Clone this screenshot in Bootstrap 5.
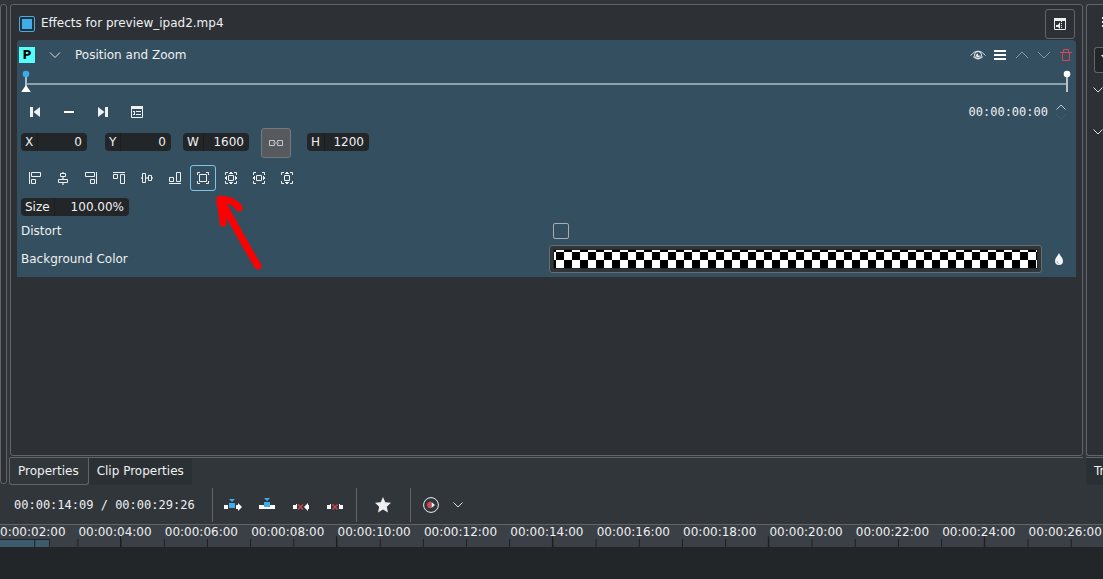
<!DOCTYPE html>
<html lang="en">
<head>
<meta charset="utf-8">
<meta name="viewport" content="width=device-width, initial-scale=1">
<title>Effects</title>
<link href="https://cdn.jsdelivr.net/npm/bootstrap@5.3.0/dist/css/bootstrap.min.css" rel="stylesheet">
<style>
:root { --line:#616569; --win:#31363b; --view:#2d3136; --dark:#232629; --fx:#344f5f; --ink:#eff0f1; }
body { background:var(--win); color:var(--ink); font:12px/16px "DejaVu Sans",sans-serif; }
svg { display:block; flex:none; }
.mono { font-family:"DejaVu Sans Mono",monospace; }
.tool { border:1px solid transparent; background:none; color:var(--ink); padding:0; display:flex; align-items:center; justify-content:center; flex:none; border-radius:3px; }
.tool:hover { border-color:#3daee9; }
.docks { padding-top:4px; }
.dock-left { width:7px; border:1px solid var(--line); border-left:0; border-radius:0 3px 3px 0; margin-bottom:2px; }
.dock-mid { margin-left:3px; margin-right:3px; min-width:0; }
.pane { background:var(--view); border:1px solid var(--line); border-radius:3px; }
.dock-right { width:17px; overflow:hidden; }
.dock-right .pane { border-right:0; border-radius:3px 0 0 3px; }
.pane-body { padding:0 6px; }
.pane-head { height:35px; padding:4px 1px 1px 2px; gap:6px; }
.pane-head label { padding-bottom:2px; }
.tick { appearance:none; width:16px; height:16px; margin:0; border:1px solid #a8adb1; border-radius:2px; flex:none; }
.tick.on { border-color:#3daee9; }
.tick.on:checked { background:#3daee9 content-box; padding:2px; }
.sz30 { width:30px; height:30px; }
.boxed { border-color:var(--line); }
.fx { background:var(--fx); border-radius:4px 4px 0 0; padding-bottom:3px; }
.fx-head { height:30px; padding-left:2px; margin-right:-1px; }
.tag { width:16px; height:16px; background:#54fffb; color:#000; font-weight:700; text-align:center; }
.sz20 { width:20px; height:22px; }
.sz22 { width:22px; height:22px; }
.chev { width:26px; margin:0 7px; height:22px; }
.keys { height:28px; padding:0 5px 0 4px; }
.keys-line { height:2px; background:#8fa2ac; margin-top:13px; }
.keys-line.start { width:5px; margin-left:-5px; }
.sz34 { width:34px; height:26px; }
.transport { height:29px; padding:0 2px 1px 1px; }
.row-geo { height:32px; padding-left:4px; }
.row-align { height:38px; padding-left:5px; gap:2px; }
.sz26 { width:26px; height:26px; }
.sel { border-color:#7fc4e6; }
.spin { display:flex; height:18px; background:var(--dark); border-radius:4px; overflow:hidden; line-height:18px; flex:none; }
.row-geo .spin { margin-bottom:2px; }
.spin label { padding:0 4px; border-right:1px solid #1b1e20; }
.spin input { flex:1; min-width:0; width:0; border:0; padding:0 5px 0 0; background:none; color:inherit; text-align:right; outline:0; }
.w66 { width:66px; }
.w62 { width:62px; }
.w108 { width:108px; }
.g4 { margin-left:4px; } .g12 { margin-left:12px; } .g16 { margin-left:16px; } .g18 { margin-left:18px; }
.row-size { height:20px; padding-left:4px; }
.form-row { padding-left:4px; display:grid; grid-template-columns:minmax(0,1fr) minmax(0,1fr); align-items:center; }
.r27 { height:27px; } .r30 { height:30px; }
.link-on { background:#56595e; border-color:#75797d; }
.swatch { height:28px; flex:1; padding:3px; border:1px solid #6a6d70; border-radius:3px; background:var(--win); }
.checks { display:block; height:20px; border:1px solid var(--dark); background:conic-gradient(#000 25%,#fff 0 50%,#000 0 75%,#fff 0) -6px 2px/16px 16px padding-box; }
.tabs-bar { margin-top:1px; border-top:1px solid var(--line); height:29px; }
.tab { border:0; background:#2b3034; color:var(--ink); padding:0 8px 2px; height:27px; border-radius:0 0 3px 3px; white-space:nowrap; }
.tab.cur { background:var(--win); border:1px solid var(--line); border-top:0; height:27px; margin-left:-1px; padding:0 9px 1px 8px; }
.bar { height:38px; padding-left:14px; }
.bar .time { width:198px; }
.rule { width:1px; height:34px; background:var(--line); margin-right:3px; }
.rule.mid { margin-left:4px; }
.rule.wide { margin-left:4px; margin-right:9px; }
.rule.end { margin-left:10px; }
.ruler { height:23px; background:#3b4046; border-top:1px solid var(--line); position:relative; overflow:hidden; }
.zone { position:absolute; left:0; bottom:0; width:50px; height:8px; background:#3d5b6d; border:1px solid var(--dark); border-width:1px 1px 0 0; }
.scale { position:relative; display:grid; grid-template-columns:repeat(13,minmax(0,1fr)); width:calc(100% + 20px); margin-left:-8px; height:22px; line-height:14px; white-space:nowrap;
 background:linear-gradient(90deg,#1b1e20 1px,transparent 1px) -1px 14px/calc(100% / 26) 8px repeat-x, linear-gradient(90deg,#1b1e20 1px,transparent 1px) 128px 11px/calc(500% / 26) 11px repeat-x; }
.scale span:first-child { padding-left:8px; }
.tracks { background:var(--dark); height:32px; }
.side-tool { height:28px; margin:10px 0 0 7px; }
.side-combo { height:26px; margin:4px 0 0 7px; border:1px solid var(--line); border-right:0; border-radius:3px 0 0 3px; background:var(--dark); overflow:hidden; width:20px; padding:4px; display:block; }
.side-list { display:grid; gap:36px; margin:14px 0 0 6px; }
.callout { position:absolute; left:199px; top:154px; pointer-events:none; }
</style>
</head>
<body>
<div class="d-flex flex-column vh-100 overflow-hidden">
 <main class="docks d-flex flex-fill">
  <div class="dock-left pane"></div>
  <section class="dock-mid d-flex flex-column flex-fill">
   <div class="pane pane-body flex-fill">
    <div class="pane-head d-flex align-items-center">
     <input class="tick on" type="checkbox" id="all" checked><label for="all" class="me-auto">Effects for preview_ipad2.mp4</label>
     <button class="tool sz30 boxed" aria-label="Split view"><svg width="14" height="14" viewBox="0 0 14 14"><path d="M1.500 1.500h11v11h-11z" fill="none" stroke="#eff0f1"/><path d="M1 1h12v3H1z" fill="#eff0f1"/><path d="M8.500 4v9" stroke="#eff0f1" stroke-dasharray="1 1"/><path d="M7 5v7L5 10H3V8h2z" fill="#eff0f1"/></svg></button>
    </div>
    <article class="fx position-relative">
     <div class="fx-head d-flex align-items-center">
      <span class="tag">P</span>
      <button class="tool chev" aria-label="Collapse"><svg width="12" height="8" viewBox="0 0 12 8"><path d="M1 1.500l5 5 5-5" fill="none" stroke="#dfe2e4"/></svg></button>
      <span class="me-auto">Position and Zoom</span>
      <button class="tool sz22" aria-label="Toggle effect"><svg width="16" height="12" viewBox="0 0 16 12"><path d="M.5 6.500Q8-2.500 15.500 6.500M3 7.500q5 5 10 0" fill="none" stroke="#d5dade"/><circle cx="8" cy="6" r="3.500" fill="none" stroke="#eff0f1"/><path d="M8 4.500A2 2 0 1 0 10 6.500H8z" fill="#eff0f1"/></svg></button>
      <button class="tool sz22" aria-label="Menu"><svg width="12" height="10" viewBox="0 0 12 10"><path d="M0 1h12M0 5h12M0 9h12" stroke="#fff" stroke-width="2"/></svg></button>
      <button class="tool sz22" aria-label="Move up"><svg width="14" height="8" viewBox="0 0 14 8"><path d="M1 7l6-6 6 6" fill="none" stroke="#87959d"/></svg></button>
      <button class="tool sz22" aria-label="Move down"><svg width="14" height="8" viewBox="0 0 14 8"><path d="M1 1l6 6 6-6" fill="none" stroke="#87959d"/></svg></button>
      <button class="tool sz22" aria-label="Delete"><svg width="12" height="12" viewBox="0 0 12 12"><path d="M0 3.500h12M3.500 3V.5h5V3M2.500 4v7.500h7V4" fill="none" stroke="#da4453"/></svg></button>
     </div>
     <div class="keys d-flex">
      <svg width="10" height="24" viewBox="0 0 10 24"><path d="M5 14h5" stroke="#8fa2ac" stroke-width="2"/><path d="M5 4v12" stroke="#9fc3d6" stroke-width="2"/><circle cx="5" cy="4" r="3.300" fill="#3daee9"/><path d="M5 15l4.800 7H.2z" fill="#fff"/></svg>
      <div class="keys-line flex-fill"></div>
      <svg width="8" height="24" viewBox="0 0 8 24"><path d="M0 14h4" stroke="#8fa2ac" stroke-width="2"/><path d="M4 4v18" stroke="#b9c4ca" stroke-width="2"/><circle cx="4" cy="4" r="3.300" fill="#fff"/></svg>
     </div>
     <div class="transport d-flex align-items-center">
      <button class="tool sz34" aria-label="Previous keyframe"><svg width="10" height="10" viewBox="0 0 10 10"><path d="M0 0h3v10H0zM10 0v10L3.500 5z" fill="#eff0f1"/></svg></button>
      <button class="tool sz34" aria-label="Remove keyframe"><svg width="10" height="2"><path d="M0 0h10v2H0z" fill="#fff"/></svg></button>
      <button class="tool sz34" aria-label="Next keyframe"><svg width="10" height="10" viewBox="0 0 10 10"><path d="M7 0h3v10H7zM0 0v10l6.500-5z" fill="#eff0f1"/></svg></button>
      <button class="tool sz34 me-auto" aria-label="Keyframe options"><svg width="12" height="12" viewBox="0 0 12 12"><path d="M.5.5h11v11H.5z" fill="none" stroke="#eff0f1"/><path d="M0 0h12v3H0z" fill="#eff0f1"/><path d="M2 5.500h2M5 5.500h5M2 8.500h2M5 8.500h5M3.500 5v4" stroke="#eff0f1"/></svg></button>
      <span class="mono">00:00:00:00</span>
      <button class="tool sz26" aria-label="Step"><svg width="10" height="16" viewBox="0 0 10 16"><path d="M.5 5.500L5 1l4.500 4.500" fill="none" stroke="#c5ccd0"/><path d="M.5 10.500L5 15l4.500-4.500" fill="none" stroke="#4b5a64"/></svg></button>
     </div>
     <div class="row-geo d-flex align-items-center">
      <div class="spin w66"><label for="x">X</label><input id="x" value="0"></div>
      <div class="spin w66 g18"><label for="y">Y</label><input id="y" value="0"></div>
      <div class="spin w66 g12"><label for="w">W</label><input id="w" value="1600"></div>
      <button class="tool sz30 link-on g12" aria-label="Keep aspect ratio"><svg width="14" height="8" viewBox="0 0 14 8"><path d="M.5 1.500h5v5h-5zM8.500 1.500h5v5h-5z" fill="none" stroke="#c5c8ca"/><path d="M4 4h6" stroke="#909397" stroke-width="2"/></svg></button>
      <div class="spin w62 g16"><label for="h">H</label><input id="h" value="1200"></div>
     </div>
     <div class="row-align d-flex align-items-center">
      <button class="tool sz26" aria-label="Align left"><svg width="14" height="14" viewBox="0 0 14 14" fill="none" stroke="#eff0f1"><path d="M1.500 1v12M3.500 1.500h9v4h-9zM3.500 8.500h4v4h-4z"/></svg></button>
      <button class="tool sz26" aria-label="Center horizontally"><svg width="14" height="14" viewBox="0 0 14 14" fill="none" stroke="#eff0f1"><path d="M7 1v1M7 6v2M7 12v2" stroke="#a3b0b8" stroke-width="2"/><path d="M4.500 2.500h5v3h-5zM2.500 8.500h9v3h-9z"/></svg></button>
      <button class="tool sz26" aria-label="Align right"><svg width="14" height="14" viewBox="0 0 14 14" fill="none" stroke="#eff0f1"><path d="M12.500 1v12M1.500 1.500h9v4h-9zM6.500 8.500h4v4h-4z"/></svg></button>
      <button class="tool sz26" aria-label="Align top"><svg width="14" height="14" viewBox="0 0 14 14" fill="none" stroke="#eff0f1"><path d="M1 1.500h12M1.500 3.500h4v4h-4zM8.500 3.500h4v9h-4z"/></svg></button>
      <button class="tool sz26" aria-label="Center vertically"><svg width="14" height="14" viewBox="0 0 14 14" fill="none" stroke="#eff0f1"><path d="M1 7h1M6 7h2M12 7h1" stroke="#a3b0b8" stroke-width="2"/><path d="M2.500 2.500h3v9h-3zM8.500 4.500h3v5h-3z"/></svg></button>
      <button class="tool sz26" aria-label="Align bottom"><svg width="14" height="14" viewBox="0 0 14 14" fill="none" stroke="#eff0f1"><path d="M1 12.500h12M1.500 6.500h4v4h-4zM8.500 1.500h4v9h-4z"/></svg></button>
      <button class="tool sz26 sel" aria-label="Fit to frame"><svg width="14" height="14" viewBox="0 0 14 14" fill="none" stroke="#eff0f1"><path d="M1.500 4V1.500H4M10 1.500h2.500V4M12.500 10v2.500H10M4 12.500H1.500V10M3.500 3.500h7v7h-7z"/></svg></button>
      <button class="tool sz26" aria-label="Original size"><svg width="14" height="14" viewBox="0 0 14 14" fill="none" stroke="#eff0f1"><path d="M1.500 4V1.500H4M10 1.500h2.500V4M12.500 10v2.500H10M4 12.500H1.500V10M4.500 4.500h5v5h-5zM6 1.500h2M5 2.500h4M6 12.500h2M5 11.500h4M1.500 6v2M2.500 5v4M12.500 6v2M11.500 5v4"/></svg></button>
      <button class="tool sz26" aria-label="Fit width"><svg width="14" height="14" viewBox="0 0 14 14" fill="none" stroke="#eff0f1"><path d="M1.500 4V1.500H4M10 1.500h2.500V4M12.500 10v2.500H10M4 12.500H1.500V10M4.500 4.500h5v5h-5zM1.500 6v2M2.500 5v4M12.500 6v2M11.500 5v4"/></svg></button>
      <button class="tool sz26" aria-label="Fit height"><svg width="14" height="14" viewBox="0 0 14 14" fill="none" stroke="#eff0f1"><path d="M1.500 4V1.500H4M10 1.500h2.500V4M12.500 10v2.500H10M4 12.500H1.500V10M4.500 4.500h5v5h-5zM6 1.500h2M5 2.500h4M6 12.500h2M5 11.500h4"/></svg></button>
     </div>
     <div class="row-size d-flex align-items-center"><div class="spin w108"><label for="size">Size</label><input id="size" value="100.00%"></div></div>
     <div class="form-row r27"><label for="distort">Distort</label><input class="tick g4" type="checkbox" id="distort"></div>
     <div class="form-row r30"><label for="bg">Background Color</label>
      <div class="d-flex align-items-center"><button class="swatch" id="bg" aria-label="Background Color"><span class="checks"></span></button>
      <button class="tool sz34" aria-label="Pick color"><svg width="10" height="14" viewBox="0 0 10 14"><path d="M5 1c1 2.500 4 5 4 8a4 4 0 0 1-8 0c0-3 3-5.500 4-8z" fill="#f3f4f5"/><path d="M3 9q0 2.500 2 3" fill="none" stroke="#a5afb5"/></svg></button></div>
     </div>
     <svg class="callout" width="48" height="78" viewBox="0 0 48 78"><path d="M42 72C31 54 20 34 5 6M7 29C7 18 3 9 4 5C11 5 19 8 23 14" fill="none" stroke="#f00" stroke-width="7" stroke-linecap="round" stroke-linejoin="round"/></svg>
    </article>
   </div>
   <div class="tabs-bar d-flex"><button class="tab cur">Properties</button><button class="tab">Clip Properties</button></div>
  </section>
  <aside class="dock-right d-flex flex-column">
   <div class="pane flex-fill">
    <div class="side-tool"><svg width="12" height="14" viewBox="0 0 12 14" class="ms-2"><path d="M0 3h6M0 7h6M0 11h6" stroke="#eff0f1" stroke-width="2"/></svg></div>
    <button class="side-combo" aria-label="Filter"><svg width="16" height="16" viewBox="0 0 16 16"><path d="M2 3h12L9 9v4l-2 1V9z" fill="#eff0f1"/></svg></button>
    <div class="side-list"><svg width="10" height="6" viewBox="0 0 10 6"><path d="M.5.5L5 5 9.500.5" fill="none" stroke="#dfe2e4"/></svg><svg width="10" height="6" viewBox="0 0 10 6"><path d="M.5.5L5 5 9.500.5" fill="none" stroke="#dfe2e4"/></svg></div>
   </div>
   <div class="tabs-bar d-flex"><button class="tab">Tr</button></div>
  </aside>
 </main>
 <div class="bar d-flex align-items-center">
  <span class="mono time">00:00:14:09 / 00:00:29:26</span>
  <span class="rule"></span>
  <button class="tool sz34" aria-label="Insert clip"><svg width="18" height="14" viewBox="0 0 18 14"><path d="M0 7h4v4H0zM12 7h2V5l4 4-4 4v-2h-2z" fill="#fff"/><path d="M5 5h6v5H5zM5 1h6L8 4z" fill="#3daee9"/></svg></button>
  <button class="tool sz34" aria-label="Overwrite clip"><svg width="16" height="14" viewBox="0 0 16 14"><path d="M0 7h16v4H0z" fill="#fff"/><path d="M5 4h6v5H5zM5 0h6L8 3z" fill="#3daee9"/></svg></button>
  <button class="tool sz34" aria-label="Extract zone"><svg width="18" height="14" viewBox="0 0 18 14"><path d="M1 7h3V6h1v5H1zM12 9l4-4v2h1v4h-1v2z" fill="#fff"/><path d="M6 6.500l5 5M11 6.500l-5 5" stroke="#c64650" stroke-width="1.500"/></svg></button>
  <button class="tool sz34" aria-label="Lift zone"><svg width="16" height="14" viewBox="0 0 16 14"><path d="M0 7h3V6h1v5H0zM12 6h1v1h3v4h-4z" fill="#fff"/><path d="M5.500 6.500l5 5M10.500 6.500l-5 5" stroke="#c64650" stroke-width="1.500"/></svg></button>
  <span class="rule wide"></span>
  <button class="tool sz34" aria-label="Favorite effects"><svg width="16" height="16" viewBox="0 0 16 16"><path d="M8 0l2.300 5.200 5.700.6-4.200 3.900L13 15.500 8 12.600 3 15.500l1.200-5.800L0 5.800l5.700-.6z" fill="#eff0f1"/></svg></button>
  <span class="rule end"></span>
  <button class="tool sz34" aria-label="Preview render"><svg width="16" height="16" viewBox="0 0 16 16"><circle cx="8" cy="8" r="7.400" fill="none" stroke="#eff0f1"/><path d="M7.500 5v6A3 3 0 0 1 7.500 5z" fill="#da4453" stroke="#da4453"/><path d="M8.500 5v6L12 8z" fill="#eff0f1"/></svg></button>
  <button class="tool sz20" aria-label="Render options"><svg width="10" height="6" viewBox="0 0 10 6"><path d="M.5.5L5 5 9.500.5" fill="none" stroke="#dfe2e4"/></svg></button>
 </div>
 <div class="ruler">
  <div class="zone"></div>
  <div class="scale"><span>0:00:02:00</span><span>00:00:04:00</span><span>00:00:06:00</span><span>00:00:08:00</span><span>00:00:10:00</span><span>00:00:12:00</span><span>00:00:14:00</span><span>00:00:16:00</span><span>00:00:18:00</span><span>00:00:20:00</span><span>00:00:22:00</span><span>00:00:24:00</span><span>00:00:26:00</span></div>
 </div>
 <div class="tracks"></div>
</div>
<script src="https://cdn.jsdelivr.net/npm/bootstrap@5.3.0/dist/js/bootstrap.bundle.min.js"></script>
</body>
</html>
